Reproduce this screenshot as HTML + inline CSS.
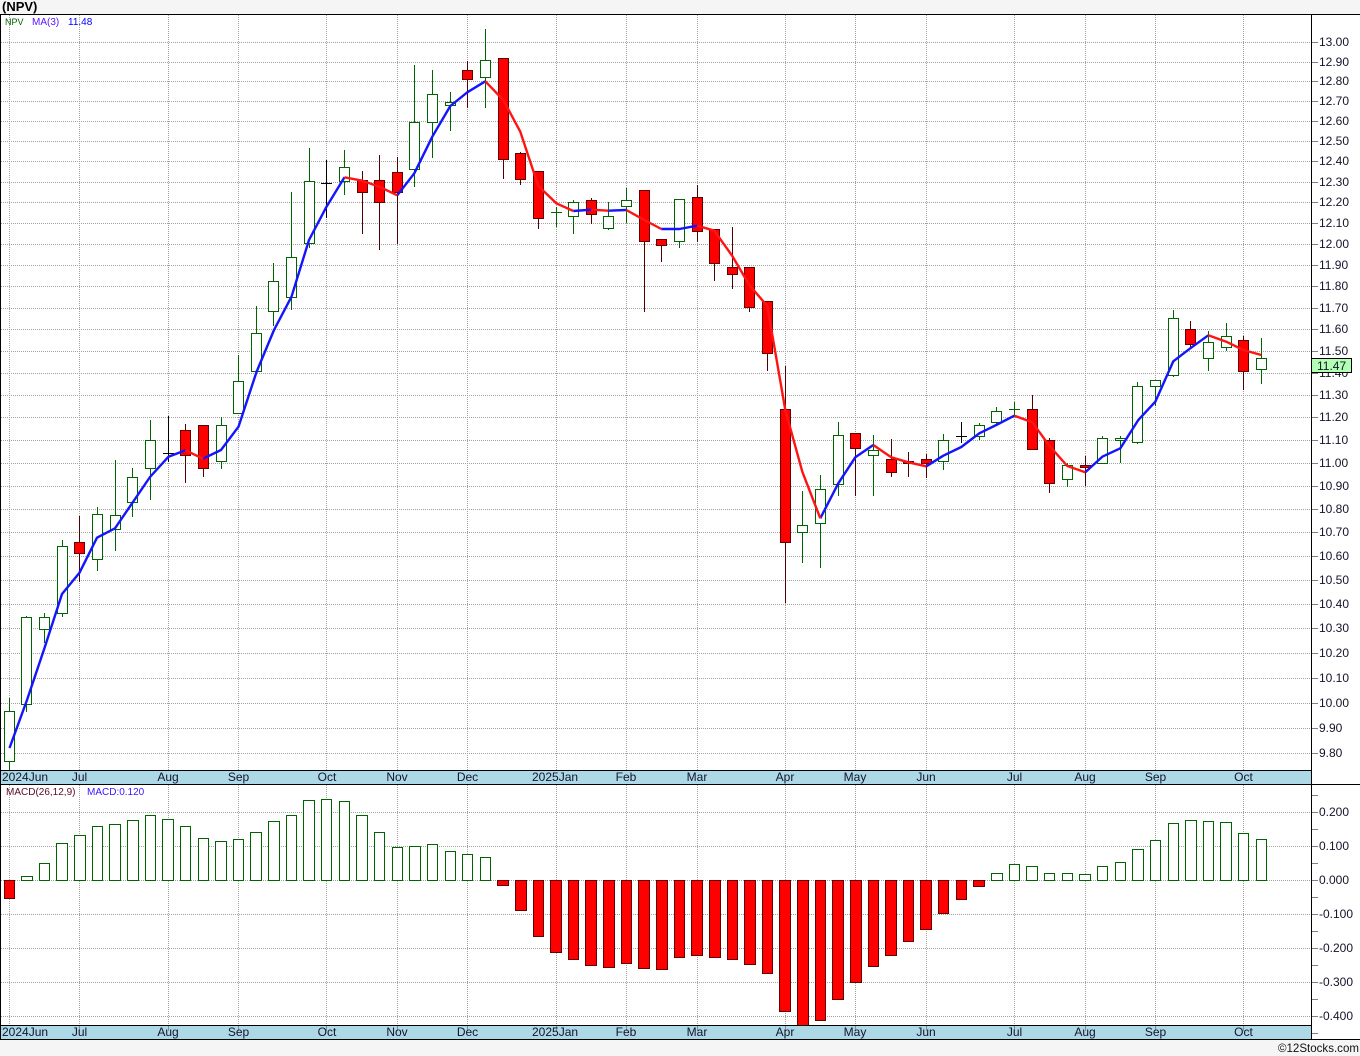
<!DOCTYPE html>
<html><head><meta charset="utf-8"><title>(NPV)</title>
<style>
html,body{margin:0;padding:0;background:#f5f5f5;width:1360px;height:1056px;overflow:hidden}
svg{display:block}
text{font-family:"Liberation Sans",sans-serif;font-size:12px;fill:#14142b}
</style></head><body>
<svg width="1360" height="1056" viewBox="0 0 1360 1056" xmlns="http://www.w3.org/2000/svg">
<rect width="1360" height="1056" fill="#f5f5f5"/>
<rect x="0" y="14" width="1360" height="1026" fill="#fff"/>
<text x="2" y="11" style="font-size:13px;font-weight:bold;fill:#000">(NPV)</text>

<!-- grid -->
<g fill="none" stroke="#a0a0a0" stroke-width="1" stroke-dasharray="1 1">
<path d="M1 42.5H1311M1 62.5H1311M1 81.5H1311M1 101.5H1311M1 121.5H1311M1 141.5H1311M1 161.5H1311M1 182.5H1311M1 202.5H1311M1 223.5H1311M1 244.5H1311M1 265.5H1311M1 286.5H1311M1 308.5H1311M1 329.5H1311M1 351.5H1311M1 373.5H1311M1 395.5H1311M1 417.5H1311M1 440.5H1311M1 463.5H1311M1 486.5H1311M1 509.5H1311M1 532.5H1311M1 556.5H1311M1 580.5H1311M1 604.5H1311M1 628.5H1311M1 653.5H1311M1 678.5H1311M1 703.5H1311M1 728.5H1311M1 753.5H1311"/>
<path d="M1 812.5H1311M1 846.5H1311M1 880.5H1311M1 914.5H1311M1 948.5H1311M1 982.5H1311M1 1016.5H1311"/>
<path d="M9.5 15V770M79.5 15V770M168.5 15V770M238.5 15V770M326.5 15V770M397.5 15V770M467.5 15V770M556.5 15V770M626.5 15V770M697.5 15V770M785.5 15V770M855.5 15V770M926.5 15V770M1014.5 15V770M1085.5 15V770M1155.5 15V770M1243.5 15V770"/>
<path d="M9.5 785V1025M79.5 785V1025M168.5 785V1025M238.5 785V1025M326.5 785V1025M397.5 785V1025M467.5 785V1025M556.5 785V1025M626.5 785V1025M697.5 785V1025M785.5 785V1025M855.5 785V1025M926.5 785V1025M1014.5 785V1025M1085.5 785V1025M1155.5 785V1025M1243.5 785V1025"/>
</g>

<!-- wicks -->
<g fill="none" stroke-width="1">
<path stroke="#006400" d="M9.5 698V770M26.5 616V712M44.5 613V643M62.5 540V617M97.5 507V571M115.5 460V551M132.5 468V517M150.5 420V500M221.5 417V469M238.5 355V413M256.5 306V372M273.5 263V326M291.5 192V310M309.5 148V248M344.5 150V195M414.5 65V187M432.5 70V158M450.5 92V131M485.5 29V108M556.5 207V227M551 212.5H562M573.5 200V234M608.5 202V230M626.5 188V223M679.5 199V248M802.5 491V563M820.5 475V568M838.5 422V496M873.5 435V496M943.5 434V470M979.5 423V440M996.5 407V424M1014.5 402V416M1009 409.5H1020M1067.5 463V487M1102.5 436V463M1120.5 436V463M1115 438.5H1126M1137.5 382V444M1155.5 380V406M1173.5 310V377M1208.5 331V371M1226.5 323V351M1261.5 338V384"/>
<path stroke="#500000" d="M79.5 516V582M185.5 424V483M203.5 425V477M362.5 171V234M379.5 155V250M397.5 157V244M467.5 61V108M503.5 58V179M520.5 152V185M538.5 171V229M591.5 198V224M644.5 190V312M661.5 239V262M697.5 185V242M714.5 229V281M732.5 227V289M749.5 267V312M767.5 301V371M785.5 366V603M855.5 433V496M891.5 439V477M908.5 452V477M926.5 454V478M1032.5 395V449M1049.5 438V493M1085.5 456V486M1190.5 321V347M1243.5 336V390"/>
<path stroke="#000" d="M168.5 416V462M163 453.5H174M326.5 160V218M321 183.5H332M961.5 422V443M956 436.5H967"/>
</g>

<!-- green bodies -->
<path fill="#fff" stroke="#006400" stroke-width="1" d="M4.5 711.5h10v50h-10zM21.5 617.5h10v87h-10zM39.5 617.5h10v12h-10zM57.5 546.5h10v67h-10zM92.5 514.5h10v45h-10zM110.5 515.5h10v14h-10zM127.5 477.5h10v25h-10zM145.5 440.5h10v28h-10zM216.5 425.5h10v36h-10zM233.5 381.5h10v32h-10zM251.5 333.5h10v38h-10zM268.5 281.5h10v30h-10zM286.5 257.5h10v40h-10zM304.5 181.5h10v62h-10zM339.5 167.5h10v14h-10zM409.5 122.5h10v47h-10zM427.5 94.5h10v28h-10zM445.5 102.5h10v3h-10zM480.5 60.5h10v17h-10zM568.5 202.5h10v14h-10zM603.5 216.5h10v12h-10zM621.5 200.5h10v6h-10zM674.5 199.5h10v42h-10zM797.5 525.5h10v7h-10zM815.5 489.5h10v34h-10zM833.5 435.5h10v49h-10zM868.5 450.5h10v5h-10zM938.5 440.5h10v21h-10zM974.5 425.5h10v11h-10zM991.5 411.5h10v11h-10zM1062.5 465.5h10v14h-10zM1097.5 438.5h10v25h-10zM1115.5 438.5h10v2h-10zM1132.5 386.5h10v56h-10zM1150.5 380.5h10v6h-10zM1168.5 318.5h10v57h-10zM1203.5 342.5h10v16h-10zM1221.5 336.5h10v11h-10zM1256.5 358.5h10v11h-10z"/>
<!-- red bodies -->
<path fill="#ff0000" stroke="#660000" stroke-width="1" d="M74.5 542.5h10v11h-10zM180.5 430.5h10v25h-10zM198.5 425.5h10v43h-10zM357.5 180.5h10v12h-10zM374.5 180.5h10v22h-10zM392.5 172.5h10v20h-10zM462.5 70.5h10v9h-10zM498.5 58.5h10v101h-10zM515.5 153.5h10v26h-10zM533.5 171.5h10v47h-10zM586.5 200.5h10v14h-10zM639.5 190.5h10v51h-10zM656.5 239.5h10v6h-10zM692.5 197.5h10v34h-10zM709.5 229.5h10v34h-10zM727.5 267.5h10v7h-10zM744.5 267.5h10v40h-10zM762.5 301.5h10v52h-10zM780.5 409.5h10v133h-10zM850.5 433.5h10v15h-10zM886.5 459.5h10v13h-10zM903.5 461.5h10v2h-10zM921.5 459.5h10v4h-10zM1027.5 409.5h10v40h-10zM1044.5 440.5h10v43h-10zM1080.5 465.5h10v2h-10zM1185.5 329.5h10v15h-10zM1238.5 340.5h10v31h-10z"/>

<!-- MA line -->
<g fill="none" stroke-width="2.4" stroke-linejoin="round">
<path stroke="#1414ff" d="M9.5 748L27 700L44.5 648L62 594L79.5 572.7L97 537.7L115 528.3L132.5 502.7L150 477L168.5 456.7L185.5 450.3"/>
<path stroke="#1414ff" d="M203 458.7L221 450L238.5 426.7L256.5 372L274 330L291.5 296.7L309 240L326.5 206.7L344.5 177.3"/>
<path stroke="#1414ff" d="M397.3 195.3L414.3 173.3L432.3 136.7L450.3 106L467.3 92.3L485.3 81.3"/>
<path stroke="#1414ff" d="M573.3 211L591.3 209.7M608.3 210.7L626.3 210M661.3 229L679.3 229L697.3 225.7"/>
<path stroke="#1414ff" d="M820.3 518.3L838.3 483.3L855.3 457.3L873.3 445"/>
<path stroke="#1414ff" d="M926.3 466.3L943.3 455.7L961.3 447L979.3 433.3L996.3 425L1014.3 415.7"/>
<path stroke="#1414ff" d="M1085.3 472.3L1102.3 456.7L1120.3 448.3L1138.3 420L1155.3 401.7L1173.3 361.3L1190.3 348.3L1208.3 335.3"/>
<path stroke="#ff1414" d="M185.5 450.3L203 458.7M344.5 177.3L362.3 180.7L379.3 186.7L397.3 195.3M485.3 81.3L503.3 100L520.3 131.7L538.3 186L556.3 203.3L573.3 211M591.3 209.7L608.3 210.7M626.3 210L644.3 220L661.3 229M697.3 225.7L714.3 230.7L732.3 256L749.3 285L767.3 306L785.3 410L802.3 471.7L820.3 518.3M873.3 445L891.3 457.3L908.3 462.3L926.3 466.3M1014.3 415.7L1032.3 422.3L1049.3 445.7L1067.3 466L1085.3 472.3M1208.3 335.3L1226.3 341.7L1243.3 350L1261.3 355"/>
</g>

<!-- MACD green -->
<path fill="#fff" stroke="#006400" stroke-width="1" d="M21.5 880.5v-4h11v4zM39.5 880.5v-17h10v17zM56.5 880.5v-37h11v37zM74.5 880.5v-45h11v45zM92.5 880.5v-54h10v54zM109.5 880.5v-56h11v56zM127.5 880.5v-60h11v60zM145.5 880.5v-65h10v65zM162.5 880.5v-61h11v61zM180.5 880.5v-54h10v54zM198.5 880.5v-42h10v42zM215.5 880.5v-39h11v39zM233.5 880.5v-41h10v41zM250.5 880.5v-48h11v48zM268.5 880.5v-59h11v59zM286.5 880.5v-65h10v65zM303.5 880.5v-80h11v80zM321.5 880.5v-81h10v81zM339.5 880.5v-79h10v79zM356.5 880.5v-65h11v65zM374.5 880.5v-48h10v48zM392.5 880.5v-33h10v33zM409.5 880.5v-34h11v34zM427.5 880.5v-36h10v36zM445.5 880.5v-29h10v29zM462.5 880.5v-26h10v26zM480.5 880.5v-23h10v23zM991.5 880.5v-7h11v7zM1009.5 880.5v-16h10v16zM1026.5 880.5v-14h11v14zM1044.5 880.5v-7h10v7zM1062.5 880.5v-7h10v7zM1079.5 880.5v-6h11v6zM1097.5 880.5v-14h10v14zM1115.5 880.5v-18h10v18zM1132.5 880.5v-31h11v31zM1150.5 880.5v-40h10v40zM1168.5 880.5v-57h10v57zM1185.5 880.5v-60h11v60zM1203.5 880.5v-59h10v59zM1220.5 880.5v-58h11v58zM1238.5 880.5v-47h10v47zM1256.5 880.5v-41h10v41z"/>
<!-- MACD red -->
<path fill="#ff0000" stroke="#660000" stroke-width="1" d="M4.5 880.5h10v18h-10zM497.5 880.5h11v5h-11zM515.5 880.5h11v30h-11zM533.5 880.5h10v56h-10zM550.5 880.5h11v72h-11zM568.5 880.5h10v79h-10zM585.5 880.5h11v85h-11zM603.5 880.5h11v87h-11zM621.5 880.5h10v83h-10zM638.5 880.5h11v88h-11zM656.5 880.5h11v89h-11zM674.5 880.5h10v77h-10zM691.5 880.5h11v75h-11zM709.5 880.5h11v77h-11zM727.5 880.5h10v79h-10zM744.5 880.5h11v84h-11zM762.5 880.5h10v93h-10zM779.5 880.5h11v131h-11zM797.5 880.5h11v145h-11zM815.5 880.5h10v140h-10zM832.5 880.5h11v119h-11zM850.5 880.5h11v102h-11zM868.5 880.5h10v86h-10zM885.5 880.5h11v75h-11zM903.5 880.5h10v61h-10zM920.5 880.5h11v49h-11zM938.5 880.5h10v33h-10zM956.5 880.5h10v19h-10zM973.5 880.5h11v6h-11z"/>

<!-- date bands -->
<rect x="1" y="771" width="1310" height="13" fill="#add8e6"/>
<rect x="1" y="1026" width="1310" height="14" fill="#add8e6"/>
<path stroke="#8a8a8a" fill="none" d="M79.5 1026v5M168.5 1026v5M238.5 1026v5M326.5 1026v5M397.5 1026v5M467.5 1026v5M556.5 1026v5M626.5 1026v5M697.5 1026v5M785.5 1026v5M855.5 1026v5M926.5 1026v5M1014.5 1026v5M1085.5 1026v5M1155.5 1026v5M1243.5 1026v5"/>

<!-- frame -->
<path fill="none" stroke="#000" stroke-width="1" d="M0 14.5H1360M0.5 14V1040M1311.5 14V1040M0 770.5H1311.5M0 784.5H1360M0 1025.5H1311.5M0 1039.5H1360"/>

<!-- axis ticks -->
<path fill="none" stroke="#808080" stroke-width="1" d="M1312 42.5h6M1312 62.5h6M1312 81.5h6M1312 101.5h6M1312 121.5h6M1312 141.5h6M1312 161.5h6M1312 182.5h6M1312 202.5h6M1312 223.5h6M1312 244.5h6M1312 265.5h6M1312 286.5h6M1312 308.5h6M1312 329.5h6M1312 351.5h6M1312 373.5h6M1312 395.5h6M1312 417.5h6M1312 440.5h6M1312 463.5h6M1312 486.5h6M1312 509.5h6M1312 532.5h6M1312 556.5h6M1312 580.5h6M1312 604.5h6M1312 628.5h6M1312 653.5h6M1312 678.5h6M1312 703.5h6M1312 728.5h6M1312 753.5h6M1312 795.5h6M1312 812.5h6M1312 829.5h6M1312 846.5h6M1312 863.5h6M1312 880.5h6M1312 897.5h6M1312 914.5h6M1312 931.5h6M1312 948.5h6M1312 965.5h6M1312 982.5h6M1312 999.5h6M1312 1016.5h6M1312 1033.5h6"/>

<!-- price labels -->
<g>
<text x="1319" y="46">13.00</text><text x="1319" y="66">12.90</text><text x="1319" y="85">12.80</text><text x="1319" y="105">12.70</text><text x="1319" y="125">12.60</text><text x="1319" y="145">12.50</text><text x="1319" y="165">12.40</text><text x="1319" y="186">12.30</text><text x="1319" y="206">12.20</text><text x="1319" y="227">12.10</text><text x="1319" y="248">12.00</text><text x="1319" y="269">11.90</text><text x="1319" y="290">11.80</text><text x="1319" y="312">11.70</text><text x="1319" y="333">11.60</text><text x="1319" y="355">11.50</text><text x="1319" y="377">11.40</text><text x="1319" y="399">11.30</text><text x="1319" y="421">11.20</text><text x="1319" y="444">11.10</text><text x="1319" y="467">11.00</text><text x="1319" y="490">10.90</text><text x="1319" y="513">10.80</text><text x="1319" y="536">10.70</text><text x="1319" y="560">10.60</text><text x="1319" y="584">10.50</text><text x="1319" y="608">10.40</text><text x="1319" y="632">10.30</text><text x="1319" y="657">10.20</text><text x="1319" y="682">10.10</text><text x="1319" y="707">10.00</text><text x="1319" y="732">9.90</text><text x="1319" y="757">9.80</text>
</g>
<!-- last price tag -->
<rect x="1311.5" y="358.5" width="40" height="14" fill="#b3ffb3" stroke="#000"/>
<text x="1317" y="370">11.47</text>

<!-- MACD labels -->
<g>
<text x="1319" y="816">0.200</text><text x="1319" y="850">0.100</text><text x="1319" y="884">0.000</text><text x="1319" y="918">-0.100</text><text x="1319" y="952">-0.200</text><text x="1319" y="986">-0.300</text><text x="1319" y="1020">-0.400</text>
</g>

<!-- band labels -->
<g>
<text x="2" y="781">2024Jun</text><text x="79.5" y="781" text-anchor="middle">Jul</text><text x="168" y="781" text-anchor="middle">Aug</text><text x="238.5" y="781" text-anchor="middle">Sep</text><text x="327" y="781" text-anchor="middle">Oct</text><text x="397" y="781" text-anchor="middle">Nov</text><text x="467.5" y="781" text-anchor="middle">Dec</text><text x="532" y="781">2025Jan</text><text x="626" y="781" text-anchor="middle">Feb</text><text x="697" y="781" text-anchor="middle">Mar</text><text x="785" y="781" text-anchor="middle">Apr</text><text x="855" y="781" text-anchor="middle">May</text><text x="926" y="781" text-anchor="middle">Jun</text><text x="1014.5" y="781" text-anchor="middle">Jul</text><text x="1085" y="781" text-anchor="middle">Aug</text><text x="1155.5" y="781" text-anchor="middle">Sep</text><text x="1243.5" y="781" text-anchor="middle">Oct</text>
<text x="2" y="1036">2024Jun</text><text x="79.5" y="1036" text-anchor="middle">Jul</text><text x="168" y="1036" text-anchor="middle">Aug</text><text x="238.5" y="1036" text-anchor="middle">Sep</text><text x="327" y="1036" text-anchor="middle">Oct</text><text x="397" y="1036" text-anchor="middle">Nov</text><text x="467.5" y="1036" text-anchor="middle">Dec</text><text x="532" y="1036">2025Jan</text><text x="626" y="1036" text-anchor="middle">Feb</text><text x="697" y="1036" text-anchor="middle">Mar</text><text x="785" y="1036" text-anchor="middle">Apr</text><text x="855" y="1036" text-anchor="middle">May</text><text x="926" y="1036" text-anchor="middle">Jun</text><text x="1014.5" y="1036" text-anchor="middle">Jul</text><text x="1085" y="1036" text-anchor="middle">Aug</text><text x="1155.5" y="1036" text-anchor="middle">Sep</text><text x="1243.5" y="1036" text-anchor="middle">Oct</text>
</g>

<!-- legends -->
<text x="5" y="25" style="font-size:9px;fill:#006400">NPV</text>
<text x="32" y="25" style="font-size:10px;fill:#5a14ff">MA(3)</text>
<text x="68" y="25" style="font-size:10px;fill:#0000ff">11.48</text>
<text x="6" y="795" style="font-size:10px;fill:#5a0a2a">MACD(26,12,9)</text>
<text x="87" y="795" style="font-size:10px;fill:#3c14ff">MACD:0.120</text>

<text x="1278" y="1052" textLength="81" lengthAdjust="spacingAndGlyphs" style="fill:#111">©12Stocks.com</text>
</svg>
</body></html>
